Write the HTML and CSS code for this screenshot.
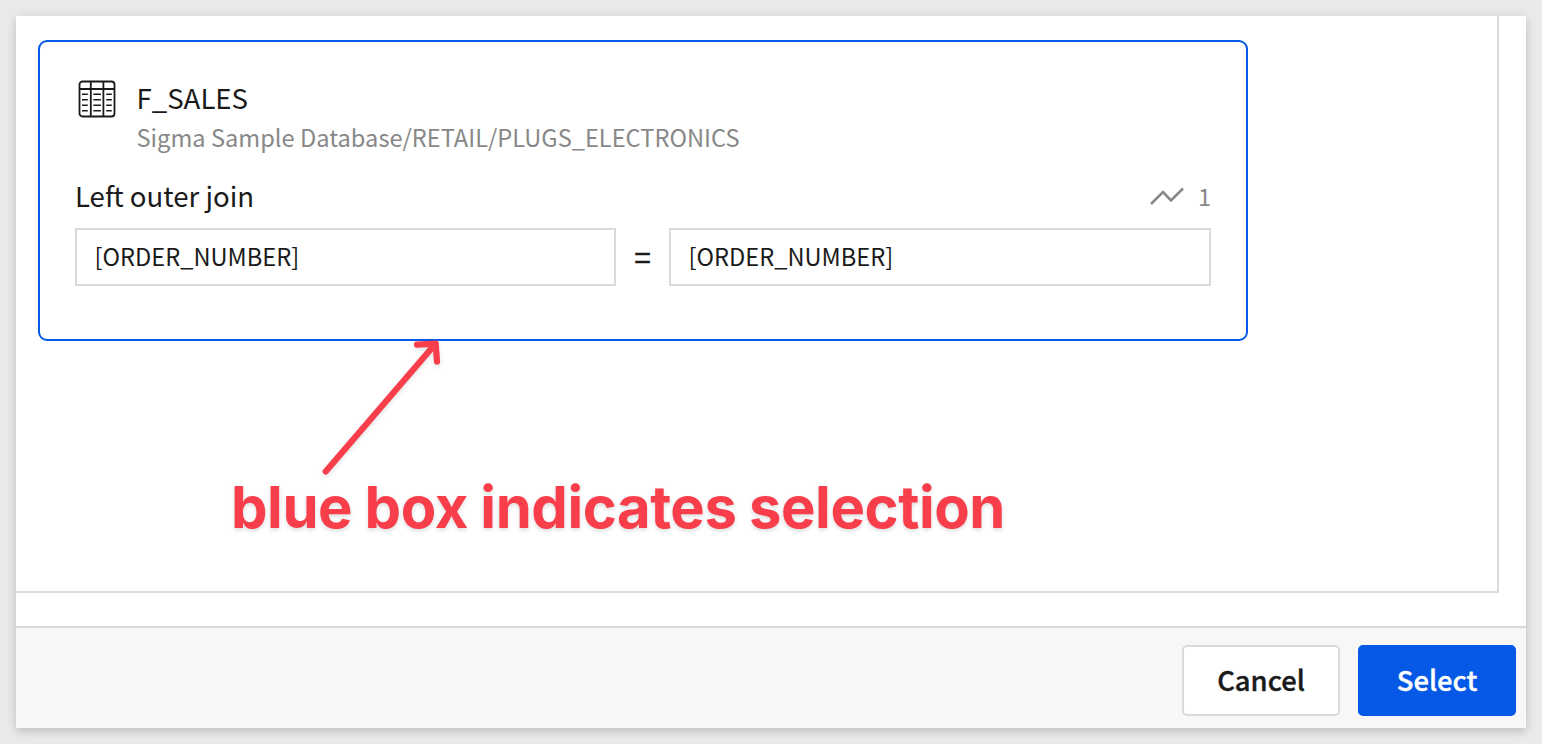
FILE: index.html
```html
<!DOCTYPE html>
<html lang="en">
<head>
<meta charset="utf-8">
<title>Select join</title>
<link rel="stylesheet" href="styles.css">
</head>
<body>
<main class="dialog">
  <section class="content">
    <div class="pane">
      <article class="card">
        <header class="source">
          <svg class="table-icon" width="38" height="38" viewBox="0 0 38 38" fill="none" stroke="#1a1a1a" stroke-width="1.8">
            <rect x="1.5" y="1.5" width="35" height="35" rx="3"/>
            <path d="M1 9H37M12.8 1V37M25.4 1V37"/>
            <path stroke-width="1.6" d="M4 14.2h5.8M15.3 14.2h7.6M28.2 14.2h5.6M4 19.7h5.8M15.3 19.7h7.6M28.2 19.7h5.6M4 25.2h5.8M15.3 25.2h7.6M28.2 25.2h5.6M4 30.7h5.8M15.3 30.7h7.6M28.2 30.7h5.6"/>
          </svg>
          <div>
            <div class="name">F_SALES</div>
            <div class="path">Sigma Sample Database/RETAIL/PLUGS_ELECTRONICS</div>
          </div>
        </header>
        <div class="join-head">
          <span class="join-type">Le<span class="tight">f</span>t outer join</span>
          <span class="matches">
            <svg width="34" height="20" viewBox="0 0 34 20" fill="none" stroke="#888" stroke-width="2.6"><path d="M1 18L13 6L21 14.5L33 2.5"/></svg>
            <span class="count">1</span>
          </span>
        </div>
        <div class="keys">
          <div class="key">[ORDER_NUMBER]</div>
          <span class="equals">=</span>
          <div class="key wide">[ORDER_NUMBER]</div>
        </div>
      </article>
    </div>
  </section>
  <footer class="actions">
    <button class="button">Cancel</button>
    <button class="button primary">Select</button>
  </footer>
  <div class="note">blue box indicates selection</div>
  <svg class="arrow" width="140" height="150" viewBox="0 0 140 150" fill="none" stroke="#f83e4b" stroke-width="6.2" stroke-linecap="round" stroke-linejoin="round"><path d="M15.7 141.5L125.7 13.5M107 14.7L125.7 13.7L127 31.5"/></svg>
</main>
</body>
</html>
```
FILE: styles.css
```css
* { box-sizing: border-box; }
body {
  margin: 0;
  height: 744px;
  padding: 16px;
  overflow: hidden;
  background: #eaeaea;
  color: #1a1a1a;
  font-family: "Noto Sans CJK SC", "Noto Sans", sans-serif;
}
.dialog {
  position: relative;
  display: flex;
  flex-direction: column;
  height: 712px;
  background: #fff;
  box-shadow: 0 4px 8px rgba(0, 0, 0, .14), 0 0 16px rgba(0, 0, 0, .06);
}
.content { height: 610px; padding-right: 27px; }
.pane {
  height: 577px;
  padding: 24px 0 0 22px;
  border-right: 2px solid #dadada;
  border-bottom: 2px solid #dadada;
}
.card {
  width: 1210px;
  height: 301px;
  padding: 38px 35px 0;
  border: 2px solid #0559e6;
  border-radius: 9px;
}
.source { display: flex; gap: 20.5px; padding-left: 3px; height: 76px; }
.table-icon { flex: none; }
.name { font-size: 27.6px; line-height: 34px; }
.path { font-size: 23.65px; line-height: 46px; color: #888; white-space: nowrap; }
.join-head {
  display: flex;
  justify-content: space-between;
  align-items: center;
  height: 72px;
  padding: 15px 0 7px;
}
.join-type { padding-bottom: 2px; font-size: 27.6px; line-height: 48px; }
.tight { letter-spacing: -.7px; }
.matches { display: flex; align-items: center; gap: 13.5px; color: #888; }
.count { font-size: 23.65px; line-height: 48px; }
.keys { display: flex; align-items: center; }
.key {
  width: 541px;
  height: 58px;
  padding: 0 17.5px;
  border: 2px solid #dadada;
  font-size: 23.65px;
  line-height: 52px;
}
.key.wide { width: 542px; }
.equals {
  flex: 1;
  padding-bottom: 3px;
  text-align: center;
  font-size: 30px;
  line-height: 54px;
  -webkit-text-stroke: .3px currentColor;
}
.actions {
  display: flex;
  justify-content: flex-end;
  gap: 18px;
  height: 102px;
  padding: 17px 10px 0;
  border-top: 2px solid #dadada;
  background: #f7f7f7;
}
.button {
  width: 158px;
  height: 71px;
  padding: 0 0 2px;
  border: 2px solid #dadada;
  border-radius: 5px;
  background: #fff;
  color: #1a1a1a;
  font: 500 27.4px/65px "Noto Sans CJK SC", "Noto Sans", sans-serif;
  -webkit-text-stroke: .4px currentColor;
}
.primary { background: #0559e6; border-color: #0559e6; color: #fff; }
.note {
  position: absolute;
  left: 215px;
  top: 455px;
  color: #f83e4b;
  font: 700 58px/72px Inter, sans-serif;
  letter-spacing: -.45px;
  word-spacing: -.8px;
  white-space: nowrap;
  text-shadow: 0 2px 4px rgba(0, 0, 0, .15);
}
.arrow {
  position: absolute;
  left: 294px;
  top: 314px;
  filter: drop-shadow(0 2px 2px rgba(0, 0, 0, .12));
}
```
